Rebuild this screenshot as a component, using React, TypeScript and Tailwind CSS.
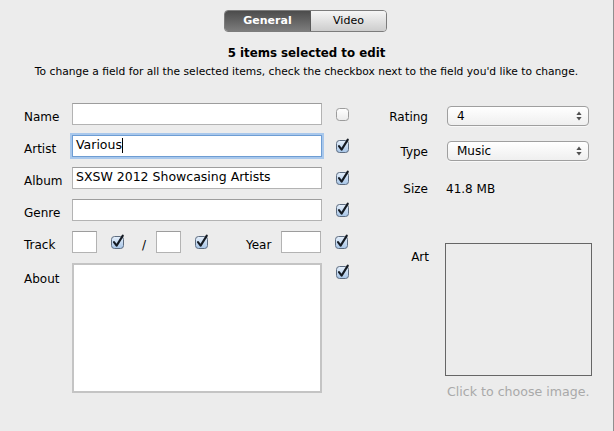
import React from "react";

function CheckBox({ checked = true }: { checked?: boolean }) {
  return (
    <svg width="16" height="16" viewBox="0 0 16 16" className="shrink-0 block">
      <defs>
        <linearGradient id="cbBlue" x1="0" y1="0" x2="0" y2="1">
          <stop offset="0" stopColor="#e6f0fb" />
          <stop offset="1" stopColor="#a6c4e6" />
        </linearGradient>
        <linearGradient id="cbWhite" x1="0" y1="0" x2="0" y2="1">
          <stop offset="0" stopColor="#ffffff" />
          <stop offset="1" stopColor="#ebebeb" />
        </linearGradient>
      </defs>
      <rect
        x="1.5"
        y="2.5"
        width="12"
        height="12"
        rx="3"
        fill={checked ? "url(#cbBlue)" : "url(#cbWhite)"}
        stroke={checked ? "#5d6c80" : "#9c9c9c"}
        strokeWidth="1"
      />
      {checked && (
        <path
          d="M4 8.2 L6.6 11.6 L12.8 1.6"
          fill="none"
          stroke="#141a22"
          strokeWidth="2.1"
          strokeLinecap="round"
          strokeLinejoin="round"
        />
      )}
    </svg>
  );
}

function Field({
  w,
  children,
  focused = false,
}: {
  w: string;
  children?: React.ReactNode;
  focused?: boolean;
}) {
  return (
    <div
      className={
        focused
          ? `${w} h-[22px] bg-white border border-[#6e9dd3] shadow-[0_0_0_2px_#a9c8ec] flex items-center pl-[3px] text-[12px] leading-none`
          : `${w} h-[22px] bg-white border border-[#b3b3b3] border-t-[#9d9d9d] flex items-center pl-[3px] text-[12px] leading-none`
      }
    >
      {children}
    </div>
  );
}

function Arrows() {
  return (
    <svg width="6" height="10" viewBox="0 0 6 10" className="block">
      <path d="M3 0.5 L5.6 4 L0.4 4 Z" fill="#505050" />
      <path d="M3 9.5 L5.6 6 L0.4 6 Z" fill="#505050" />
    </svg>
  );
}

function Select({ value }: { value: string }) {
  return (
    <div className="w-[142px] h-[20px] rounded-[4px] border border-[#9f9f9f] bg-gradient-to-b from-[#ffffff] to-[#efefef] shadow-[0_1px_0_#f8f8f8] flex items-center justify-between pl-[9px] pr-[6px] text-[12px] leading-none">
      <span>{value}</span>
      <Arrows />
    </div>
  );
}

function Label({ children }: { children: React.ReactNode }) {
  return <div className="w-[48px] text-[12px] pt-[6px]">{children}</div>;
}

export default function App() {
  return (
    <div className="w-[614px] h-[431px] bg-[#ececec] border-r border-[#8f8f8f] overflow-hidden text-black font-['DejaVu_Sans','Liberation_Sans',sans-serif]">
      {/* segmented control */}
      <div className="flex justify-center pt-[10px]">
        <div className="flex h-[22px] rounded-[4px] border border-[#7c7c7c] overflow-hidden ml-[-2px]">
          <div className="w-[86px] bg-gradient-to-b from-[#4c4c4c] to-[#7d7d7d] text-white font-bold text-[11px] flex items-center justify-center border-r border-[#5a5a5a]">
            General
          </div>
          <div className="w-[75px] bg-gradient-to-b from-[#f6f6f6] to-[#cdcdcd] text-[11px] flex items-center justify-center">
            Video
          </div>
        </div>
      </div>

      <div className="text-center font-bold text-[11.8px] leading-none mt-[16px]">
        5 items selected to edit
      </div>
      <div className="text-center text-[10.7px] leading-none mt-[7px]">
        To change a field for all the selected items, check the checkbox next to the field you'd like to change.
      </div>

      <div className="flex pl-[24px] mt-[25px]">
        {/* left column */}
        <div className="flex flex-col gap-[10px] w-[328px]">
          <div className="flex items-center h-[22px]">
            <Label>Name</Label>
            <Field w="w-[250px]" />
            <div className="ml-[13px]">
              <CheckBox checked={false} />
            </div>
          </div>
          <div className="flex items-center h-[22px]">
            <Label>Artist</Label>
            <Field w="w-[250px]" focused>
              <span className="text-[12.5px]">Various</span>
              <span className="w-px h-[15px] bg-black" />
            </Field>
            <div className="ml-[13px]">
              <CheckBox />
            </div>
          </div>
          <div className="flex items-center h-[22px]">
            <Label>Album</Label>
            <Field w="w-[250px]">
              <span className="text-[12.5px]">SXSW 2012 Showcasing Artists</span>
            </Field>
            <div className="ml-[13px]">
              <CheckBox />
            </div>
          </div>
          <div className="flex items-center h-[22px]">
            <Label>Genre</Label>
            <Field w="w-[250px]" />
            <div className="ml-[13px]">
              <CheckBox />
            </div>
          </div>
          <div className="flex items-center h-[22px]">
            <Label>Track</Label>
            <Field w="w-[25px]" />
            <div className="ml-[13px]">
              <CheckBox />
            </div>
            <div className="w-[30px] pl-[16px] pt-[6px] text-[12px]">/</div>
            <Field w="w-[25px]" />
            <div className="ml-[13px]">
              <CheckBox />
            </div>
            <div className="ml-[36px] w-[35px] pt-[6px] text-[12px]">Year</div>
            <Field w="w-[40px]" />
            <div className="ml-[13px]">
              <CheckBox />
            </div>
          </div>
          <div className="flex items-start">
            <div className="w-[48px] text-[12px] pt-[7px]">About</div>
            <div className="w-[250px] h-[130px] bg-white border-2 border-[#c4c4c4]" />
            <div className="ml-[13px] mt-[1px]">
              <CheckBox />
            </div>
          </div>
        </div>

        {/* right column */}
        <div className="flex flex-col ml-[34px] pt-[3px]">
          <div className="flex items-center h-[20px]">
            <div className="w-[42px] text-right text-[12px] pt-[3px]">Rating</div>
            <div className="ml-[19px]">
              <Select value="4" />
            </div>
          </div>
          <div className="flex items-center h-[20px] mt-[15px]">
            <div className="w-[42px] text-right text-[12px] pt-[2px]">Type</div>
            <div className="ml-[19px]">
              <Select value="Music" />
            </div>
          </div>
          <div className="flex items-center h-[16px] mt-[20px]">
            <div className="w-[42px] text-right text-[12px]">Size</div>
            <div className="ml-[18px] text-[12px]">41.8 MB</div>
          </div>
          <div className="flex items-start mt-[46px]">
            <div className="w-[43px] text-right text-[12px] pt-[5px]">Art</div>
            <div className="ml-[16px] flex flex-col">
              <div className="w-[147px] h-[133px] border border-[#666666]" />
              <div className="mt-[7px] pl-[2px] text-[12.6px] text-[#a9a9a9]">
                Click to choose image.
              </div>
            </div>
          </div>
        </div>
      </div>
    </div>
  );
}
